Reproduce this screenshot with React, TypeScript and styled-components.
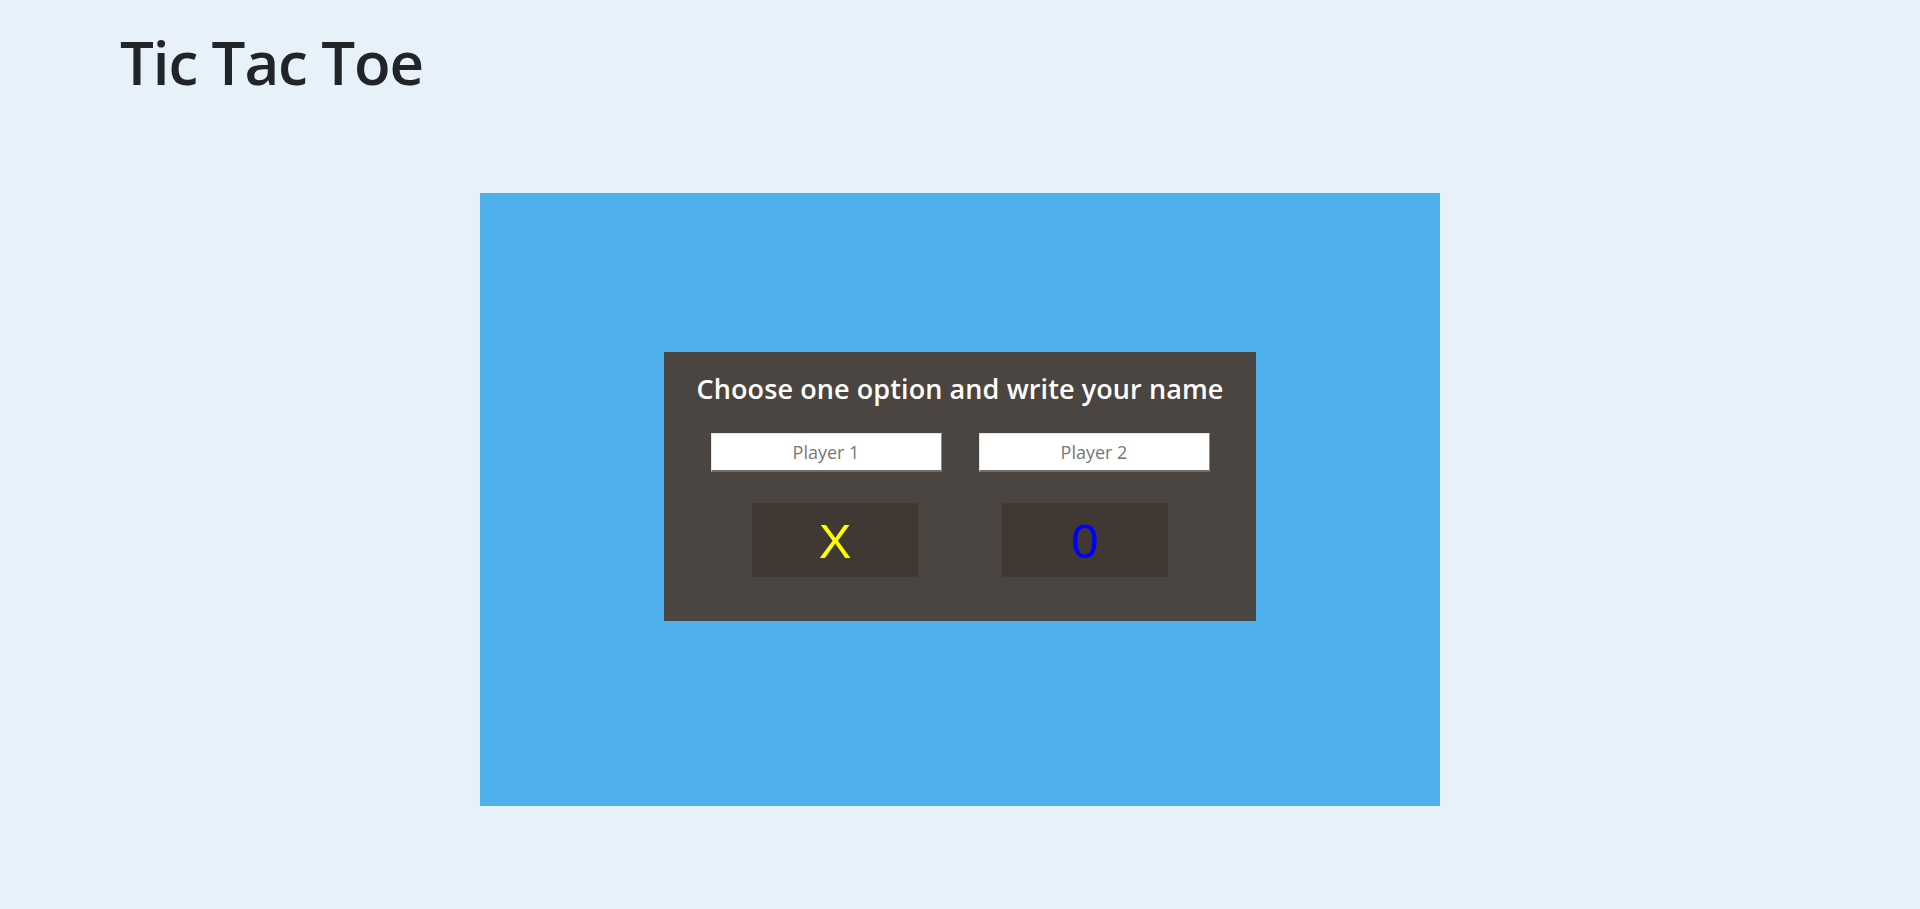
import React from "react";
import styled, { createGlobalStyle } from "styled-components";

const GlobalStyle = createGlobalStyle`
  html, body {
    margin: 0;
    padding: 0;
    background: #e6f1fa;
  }
  body {
    font-family: "Open Sans", "Noto Sans", sans-serif;
  }
  * { box-sizing: border-box; }
`;

const Page = styled.div`
  min-height: 909px;
  background: #e6f1fa;
  padding-top: 26px;
`;

const Header = styled.header`
  padding-left: 120px;
`;

const Title = styled.h1`
  margin: 0;
  font-family: "Open Sans", sans-serif;
  font-size: 60px;
  line-height: 72px;
  font-weight: 600;
  color: #212529;
  letter-spacing: -1.1px;
`;

const Board = styled.main`
  width: 960px;
  height: 613px;
  margin: 95px auto 0;
  background: #4fb1eb;
  display: flex;
  justify-content: center;
  align-items: flex-start;
  padding-top: 159px;
`;

const Dialog = styled.section`
  width: 592px;
  height: 269px;
  background: #4a4540;
  display: flex;
  flex-direction: column;
  align-items: center;
  padding-top: 21px;
`;

const Prompt = styled.h2`
  margin: 0;
  font-family: "Open Sans", sans-serif;
  font-size: 27px;
  line-height: 32px;
  font-weight: 600;
  color: #ffffff;
  letter-spacing: 0.1px;
`;

const InputRow = styled.div`
  display: flex;
  gap: 37px;
  margin-top: 28px;
`;

const NameInput = styled.input`
  width: 231px;
  height: 39px;
  background: #ffffff;
  border-style: solid;
  border-width: 1px 1px 2px 1px;
  border-color: #e4e4e4 #8d8985 #6f6b67 #e4e4e4;
  outline: none;
  text-align: center;
  font-family: "Open Sans", sans-serif;
  font-size: 18px;
  color: #333;
  padding: 0;
  &::placeholder {
    color: #7a7676;
  }
`;

const ChoiceRow = styled.div`
  display: flex;
  gap: 84px;
  margin-top: 31px;
`;

const Choice = styled.button<{ $color: string }>`
  width: 166px;
  height: 74px;
  background: #3f3833;
  border: none;
  color: ${(p) => p.$color};
  font-family: "Liberation Sans", "Open Sans", sans-serif;
  font-size: 49px;
  line-height: 1;
  padding: 3px 0 0;
  cursor: pointer;
  display: flex;
  align-items: center;
  justify-content: center;
`;

export default function App() {
  return (
    <Page>
      <GlobalStyle />
      <Header>
        <Title>Tic Tac Toe</Title>
      </Header>
      <Board>
        <Dialog>
          <Prompt>Choose one option and write your name</Prompt>
          <InputRow>
            <NameInput placeholder="Player 1" />
            <NameInput placeholder="Player 2" />
          </InputRow>
          <ChoiceRow>
            <Choice $color="#ffff00">X</Choice>
            <Choice $color="#0000ff">0</Choice>
          </ChoiceRow>
        </Dialog>
      </Board>
    </Page>
  );
}
